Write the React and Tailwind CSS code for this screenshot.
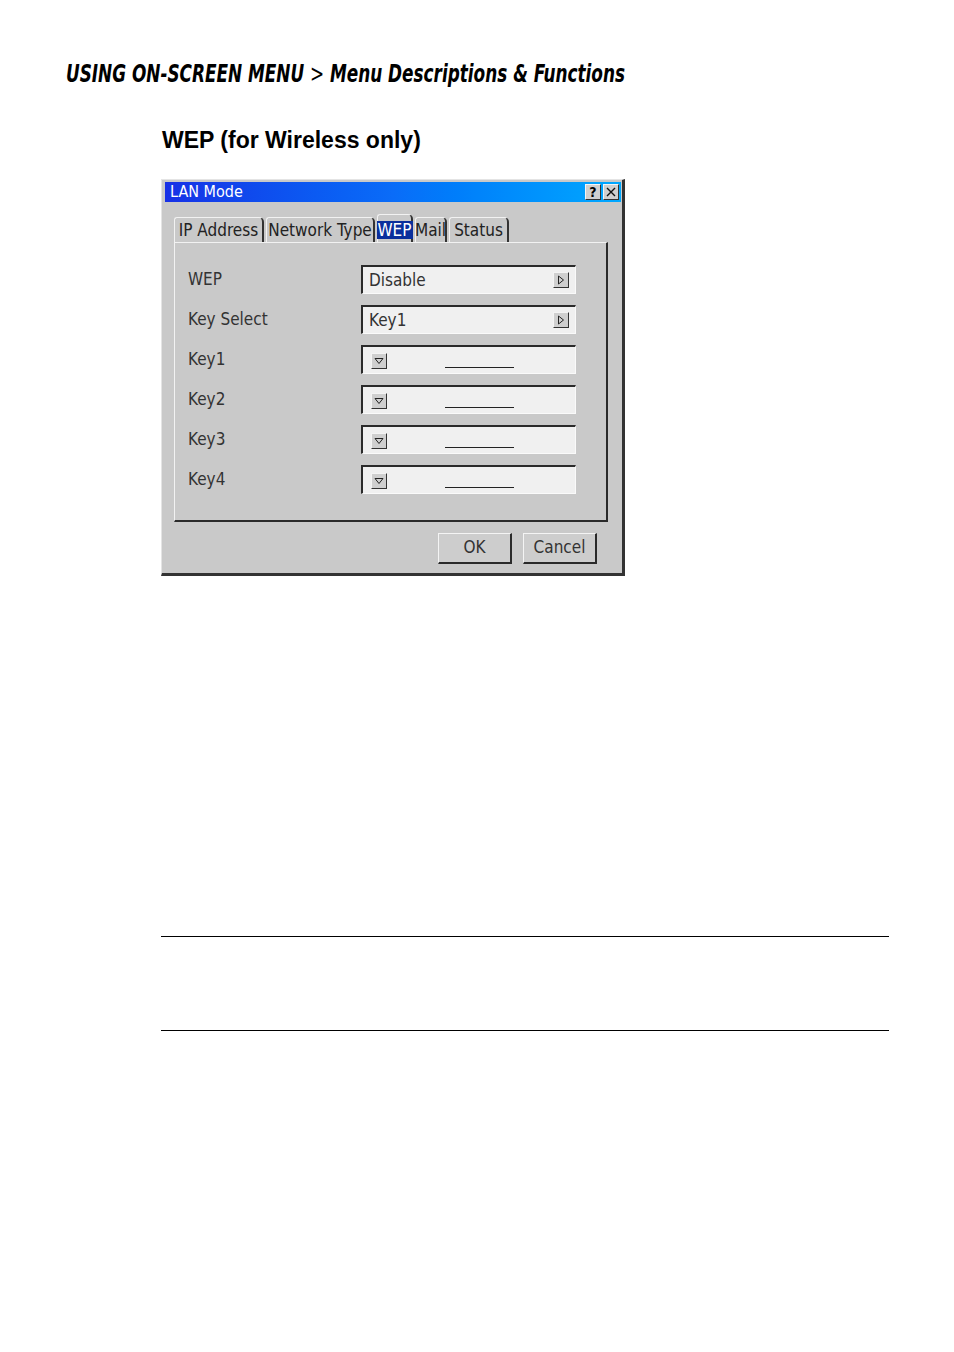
import React from "react";

const ui = { fontFamily: '"DejaVu Sans Condensed", "Liberation Sans", sans-serif' };

function Tab({ label, active, width }) {
  return (
    <div
      className={`relative flex items-end border-l border-t border-[#f2f2f2] border-r-2 border-r-[#333] rounded-tr-[5px] rounded-tl-[3px] ${active ? "h-[28px]" : "h-[25px]"}`}
      style={{ width }}
    >
      <div className="w-full flex justify-center pb-[3px]">
        {active ? (
          <span className="bg-[#0a2f9c] text-white px-[1px] leading-[18px]">{label}</span>
        ) : (
          <span className="leading-[18px] text-[#222]">{label}</span>
        )}
      </div>
    </div>
  );
}

function Field({ children }) {
  return (
    <div className="w-[215px] h-[29px] bg-[#f0f0f0] border-t-2 border-l-2 border-[#2a2a2a] border-b border-r border-b-[#fafafa] border-r-[#fafafa] flex items-center">
      {children}
    </div>
  );
}

function SmallBtn({ children }) {
  return (
    <div className="w-[16px] h-[16px] bg-[#cfcfcf] border-t border-l border-[#f4f4f4] border-b border-r border-b-[#333] border-r-[#333] flex items-center justify-center">
      {children}
    </div>
  );
}

function SelectRow({ label, value }) {
  return (
    <div className="flex items-center h-[29px]">
      <div className="w-[186px] pl-[13px] text-[17px] text-[#333]">{label}</div>
      <Field>
        <span className="pl-[6px] pt-[2px] text-[17px] text-[#333] flex-1">{value}</span>
        <div className="mr-[6px]">
          <SmallBtn>
            <svg width="8" height="10" viewBox="0 0 8 10">
              <path d="M1.5 1 L6.5 5 L1.5 9 Z" fill="none" stroke="#222" strokeWidth="1" />
            </svg>
          </SmallBtn>
        </div>
      </Field>
    </div>
  );
}

function KeyRow({ label }) {
  return (
    <div className="flex items-center h-[29px]">
      <div className="w-[186px] pl-[13px] text-[17px] text-[#333]">{label}</div>
      <Field>
        <div className="ml-[8px] mt-[2px]">
          <SmallBtn>
            <svg width="10" height="8" viewBox="0 0 10 8">
              <path d="M1 1.5 L9 1.5 L5 6.5 Z" fill="none" stroke="#222" strokeWidth="1" />
            </svg>
          </SmallBtn>
        </div>
        <div className="ml-[58px] mt-[14px] w-[69px] h-[1px] bg-[#222]" />
      </Field>
    </div>
  );
}

function Button({ children }) {
  return (
    <div className="w-[74px] h-[31px] bg-[#cdcdcd] border-t border-l border-[#f4f4f4] border-b-2 border-r-2 border-b-[#2a2a2a] border-r-[#2a2a2a] flex items-center justify-center text-[17px] text-[#333]">
      {children}
    </div>
  );
}

function Dialog() {
  return (
    <div
      className="w-[464px] bg-[#c9c9c9] border-t border-l border-[#e4e4e4] border-r-[3px] border-b-[3px] border-r-[#333] border-b-[#333] pt-[2px] pl-[3px] pr-[1px]"
      style={ui}
    >
      <div className="h-[20px] bg-gradient-to-r from-[#1730e6] via-[#0a6cf8] to-[#00a8ff] flex items-center pl-[5px] pr-[2px]">
        <span className="text-white text-[16px] leading-none flex-1">LAN Mode</span>
        <div className="flex gap-[2px]">
          <div className="w-[16px] h-[16px] bg-[#cfcfcf] border-t border-l border-[#f4f4f4] border-b border-r border-b-[#333] border-r-[#333] flex items-center justify-center text-[14px] leading-none font-bold text-black">?</div>
          <div className="w-[16px] h-[16px] bg-[#cfcfcf] border-t border-l border-[#f4f4f4] border-b border-r border-b-[#333] border-r-[#333] flex items-center justify-center">
            <svg width="10" height="10" viewBox="0 0 10 10">
              <path d="M1 1 L9 9 M9 1 L1 9" stroke="#111" strokeWidth="1.4" />
            </svg>
          </div>
        </div>
      </div>

      <div className="pl-[9px] pr-[14px] pt-[12px]">
        <div className="flex items-end gap-[2px] text-[17px]">
          <Tab label="IP Address" width={90} />
          <Tab label="Network Type" width={109} />
          <Tab label="WEP" width={36} active />
          <Tab label="Mail" width={32} />
          <Tab label="Status" width={60} />
        </div>
        <div className="w-[434px] border-l border-t border-[#f2f2f2] border-r-2 border-b-2 border-r-[#2a2a2a] border-b-[#2a2a2a] pt-[22px] pb-[26px] flex flex-col gap-[11px]">
          <SelectRow label="WEP" value="Disable" />
          <SelectRow label="Key Select" value="Key1" />
          <KeyRow label="Key1" />
          <KeyRow label="Key2" />
          <KeyRow label="Key3" />
          <KeyRow label="Key4" />
        </div>
        <div className="flex justify-end gap-[11px] pt-[11px] pb-[9px] pr-[10px]">
          <Button>OK</Button>
          <Button>Cancel</Button>
        </div>
      </div>
    </div>
  );
}

export default function App() {
  return (
    <div className="w-[954px] min-h-[1352px] bg-white overflow-hidden">
      <div className="pt-[58px] pl-[66px]">
        <h1
          className="text-[25px] font-bold italic text-black leading-[31px] whitespace-nowrap origin-left scale-x-[0.75]"
          style={{ fontFamily: '"DejaVu Sans Condensed", "Liberation Sans", sans-serif' }}
        >
          USING ON-SCREEN MENU <span className="font-normal not-italic">&gt;</span> Menu Descriptions &amp; Functions
        </h1>
      </div>
      <div className="pl-[162px] pt-[37px]">
        <h2
          className="text-[23px] font-bold text-black leading-[28px]"
          style={{ fontFamily: '"Liberation Sans", Arial, sans-serif' }}
        >
          WEP (for Wireless only)
        </h2>
      </div>
      <div className="pl-[161px] pt-[25px]">
        <Dialog />
      </div>
      <div className="pl-[161px] pt-[360px]">
        <div className="w-[728px] h-[1px] bg-black" />
        <div className="h-[93px]" />
        <div className="w-[728px] h-[1px] bg-black" />
      </div>
    </div>
  );
}
